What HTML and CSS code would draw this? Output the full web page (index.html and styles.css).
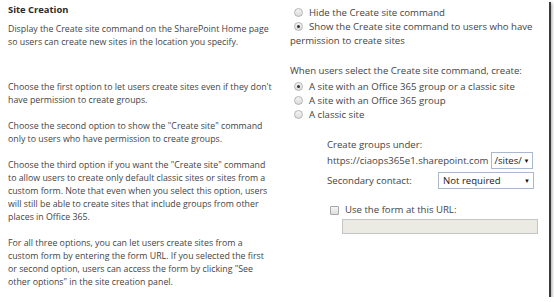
FILE: index.html
```html
<!DOCTYPE html>
<html lang="en">

<head>
    <meta charset="UTF-8">
    <meta name="viewport" content="width=device-width, initial-scale=1.0">
    <title>Site Creation</title>
    <link rel="stylesheet" href="styles.css">
</head>

<body>
    <div class="frame">
        <div class="desc">
            <h2>Site Creation</h2>
            <p class="intro">Display the Create site command on the SharePoint Home page<br>so users can create new sites in the location you specify.</p>
            <p class="first">Choose the first option to let users create sites even if they don't<br>have permission to create groups.</p>
            <p>Choose the second option to show the "Create site" command<br>only to users who have permission to create groups.</p>
            <p>Choose the third option if you want the "Create site" command<br>to allow users to create only default classic sites or sites from a<br>custom form. Note that even when you select this option, users<br>will still be able to create sites that include groups from other<br>places in Office 365.</p>
            <p>For all three options, you can let users create sites from a<br>custom form by entering the form URL. If you selected the first<br>or second option, users can access the form by clicking "See<br>other options" in the site creation panel.</p>
        </div>

        <div class="settings">
            <div class="opt"><span class="radio"></span>Hide the Create site command</div>
            <div class="opt"><span class="radio on"></span>Show the Create site command to users who have<br>permission to create sites</div>

            <div class="when">When users select the Create site command, create:</div>
            <div class="choices">
                <div class="opt"><span class="radio on"></span>A site with an Office 365 group or a classic site</div>
                <div class="opt"><span class="radio"></span>A site with an Office 365 group</div>
                <div class="opt"><span class="radio"></span>A classic site</div>
            </div>

            <div class="groups">
                <div>Create groups under:</div>
                <div class="row">
                    <span>https://ciaops365e1.sharepoint.com</span>
                    <span class="select path">/sites/<i>&#9660;</i></span>
                </div>
                <div class="row contact">
                    <span class="label">Secondary contact:</span>
                    <span class="select wide">Not required<i>&#9660;</i></span>
                </div>
                <div class="check"><span class="box"></span>Use the form at this URL:</div>
                <div class="url"></div>
            </div>
        </div>
    </div>
</body>

</html>
```

FILE: styles.css
```css
body {
    margin: 0;
    background-color: #fff;
    color: #444;
    font-family: 'Open Sans', 'Noto Sans', sans-serif;
    font-size: 9.6px;
}

.frame {
    display: grid;
    grid-template-columns: 290px 1fr;
    width: 549px;
    height: 297px;
    background-color: #fff;
    box-shadow: 2px 2px 0 #3a3a3a, 3px 3px 3px rgba(0, 0, 0, 0.35);
}

.desc {
    padding: 3px 0 0 8px;
    white-space: nowrap;
    font-size: 8.8px;
}

.desc h2 {
    margin: 0;
    font-size: 9.4px;
    line-height: 14px;
    font-weight: bold;
    color: #2b2b2b;
}

.desc p {
    margin: 13px 0 0;
    line-height: 13px;
}

.desc p.intro {
    margin-top: 6px;
}

.desc p.first {
    margin-top: 32px;
}

.settings {
    padding-top: 6px;
    white-space: nowrap;
}

.opt {
    line-height: 14px;
}

.radio {
    display: inline-block;
    position: relative;
    width: 7px;
    height: 7px;
    margin: 0 6px 0 4px;
    vertical-align: -1px;
    border: 1px solid #b4b4b4;
    border-radius: 50%;
    background: linear-gradient(#f4f4f4, #dcdcdc);
}

.radio.on::after {
    content: "";
    position: absolute;
    left: 2px;
    top: 2px;
    width: 3px;
    height: 3px;
    border-radius: 50%;
    background-color: #333;
}

.when {
    margin-top: 16px;
    line-height: 14px;
}

.choices {
    margin-top: 2px;
}

.groups {
    margin: 16px 0 0 37px;
}

.groups > div:first-child {
    line-height: 14px;
}

.row {
    display: flex;
    align-items: center;
    height: 17px;
}

.row.contact {
    margin-top: 3px;
}

.label {
    width: 111px;
}

.select {
    display: flex;
    align-items: center;
    justify-content: space-between;
    box-sizing: border-box;
    height: 17px;
    margin-left: 3px;
    padding: 0 3px 0 4px;
    border: 1px solid #a9b8cc;
    color: #222;
}

.row.contact .select {
    margin-left: 0;
}

.select i {
    font-style: normal;
    font-size: 6px;
    color: #111;
}

.select.path {
    width: 42px;
    padding-left: 2px;
}

.select.wide {
    width: 96px;
}

.check {
    display: flex;
    align-items: center;
    margin-top: 14px;
    line-height: 14px;
}

.box {
    width: 7px;
    height: 7px;
    margin: 0 6px 0 3px;
    border: 1px solid #a8a8a8;
    border-radius: 1px;
    background: linear-gradient(#f6f6f6, #dedede);
}

.url {
    width: 196px;
    height: 15px;
    box-sizing: border-box;
    margin: 2px 0 0 15px;
    border: 1px solid #c6c6c6;
    background-color: #ebebe4;
}
```
